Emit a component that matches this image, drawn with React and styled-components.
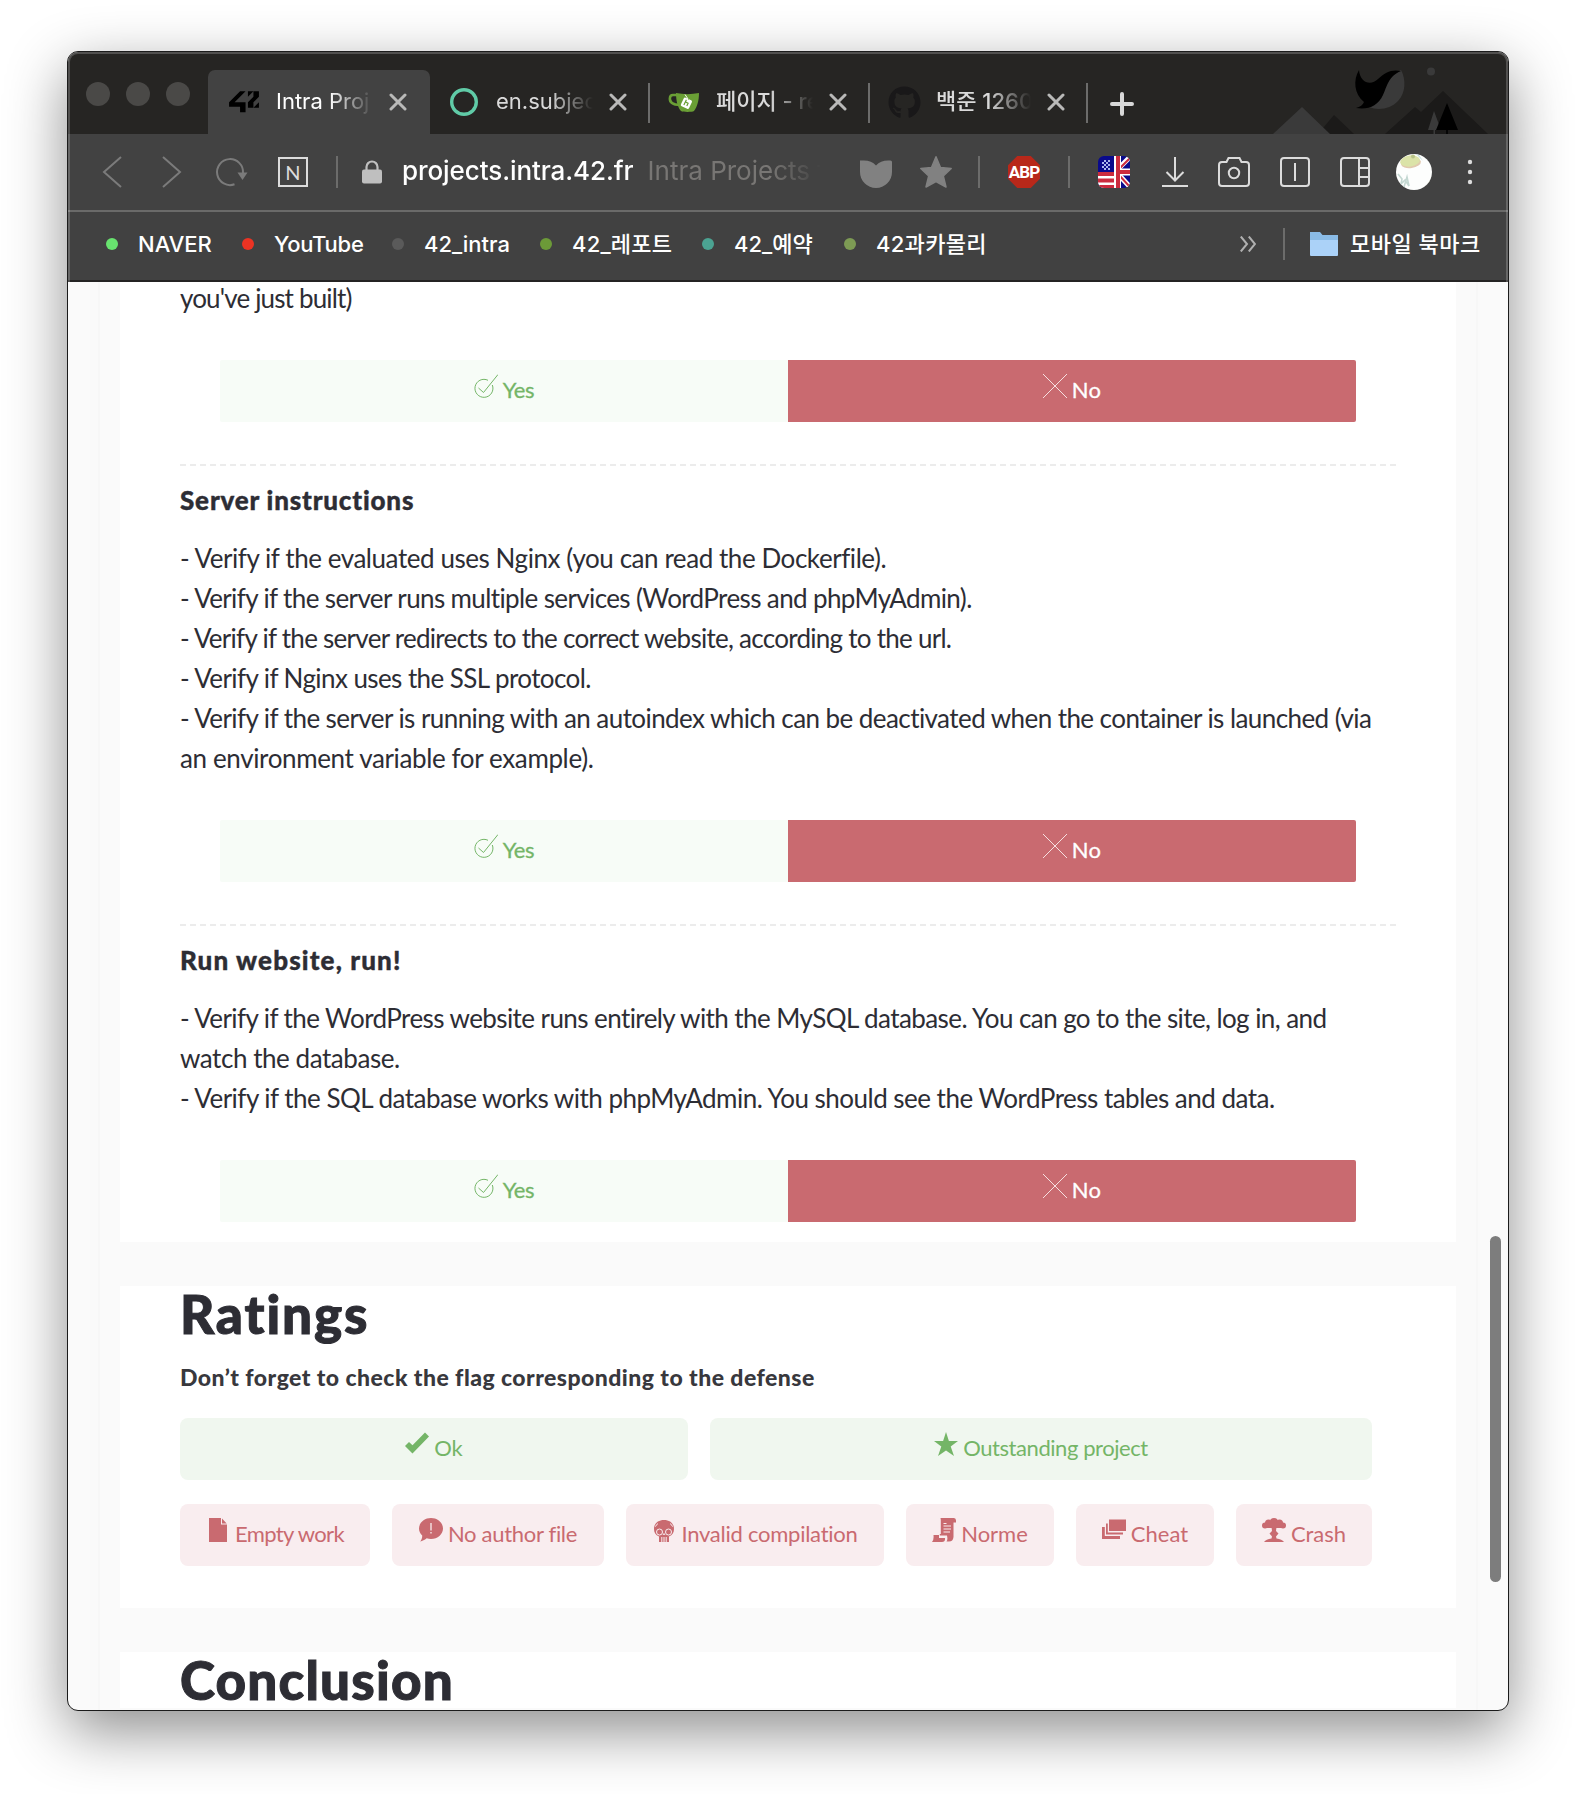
import React from "react";
import styled, { createGlobalStyle, css } from "styled-components";
import { FaGithub } from "react-icons/fa";

const UI = `Inter, "Noto Sans CJK KR", sans-serif`;
const BODY = `Lato, "Open Sans", sans-serif`;

const GlobalStyle = createGlobalStyle`
  * { box-sizing: border-box; }
  body { margin: 0; background: #fff; }
  h1, h2, h3, p { margin: 0; }
  svg { display: block; flex: none; }
`;

const Desktop = styled.div`
  height: 1794px;
  padding: 51px 67px 83px;
  overflow: hidden;
`;

const Window = styled.div`
  position: relative;
  display: flex;
  flex-direction: column;
  height: 1660px;
  border: 1px solid #1b1b1b;
  border-radius: 11px;
  overflow: hidden;
  background: #fafafa;
  box-shadow: 0 20px 60px rgba(0, 0, 0, 0.45);
`;

const Chrome = styled.div`
  position: relative;
  flex: none;
  font-family: ${UI};
  color: #fff;
  &::after {
    content: "";
    position: absolute;
    inset: 0;
    border: 2px solid rgba(255, 255, 255, 0.2);
    border-bottom: 0;
    border-radius: 10px 10px 0 0;
    pointer-events: none;
  }
`;

const TabBar = styled.div`
  display: flex;
  height: 82px;
  padding-top: 18px;
  background: #262523;
`;

const Lights = styled.div`
  display: flex;
  gap: 16px;
  width: 140px;
  padding: 12px 0 0 18px;
`;

const Light = styled.span`
  width: 24px;
  height: 24px;
  border-radius: 50%;
  background: #4a4947;
`;

const Tab = styled.div`
  display: flex;
  align-items: center;
  gap: 16px;
  width: ${(p) => p.$width}px;
  padding-left: 18px;
  color: #dadada;
  font-size: 22px;
  ${(p) =>
    p.$active &&
    css`
      padding-left: 20px;
      color: #fff;
      background: #424242;
      border-radius: 7px 7px 0 0;
    `}
`;

const Favicon = styled.span`
  display: flex;
  justify-content: center;
  width: 32px;
`;

const TabLabel = styled.span`
  width: ${(p) => p.$width || 97}px;
  height: 40px;
  line-height: 38px;
  font-weight: ${(p) => p.$weight || 400};
  white-space: nowrap;
  overflow: hidden;
  mask-image: linear-gradient(to right, #000 55%, transparent 100%);
`;

const Separator = styled.span`
  flex: none;
  width: 2px;
  height: ${(p) => p.$height || 32}px;
  margin: ${(p) => p.$margin || 0};
  background: #6c6c6b;
`;

const NewTab = styled.div`
  padding: 22px 0 0 22px;
`;

const Scenery = styled.div`
  margin: -18px 0 0 auto;
`;

const Toolbar = styled.div`
  display: flex;
  align-items: center;
  height: 78px;
  padding-left: 34px;
  background: #424242;
  border-bottom: 2px solid #6a6a69;
`;

const Tool = styled.span`
  display: flex;
  flex: none;
  justify-content: center;
  width: ${(p) => p.$width || 32}px;
  margin-left: ${(p) => p.$gap || 0}px;
`;

const NaverButton = styled.span`
  flex: none;
  width: 30px;
  height: 30px;
  margin-left: 30px;
  border: 2px solid #dcdcdc;
  color: #dcdcdc;
  font: 400 20px/26px ${BODY};
  text-align: center;
`;

const Address = styled.div`
  display: flex;
  gap: 14px;
  width: 428px;
  margin: 0 0 2px 20px;
  font-size: 26px;
  line-height: 40px;
  white-space: nowrap;
  overflow: hidden;
  mask-image: linear-gradient(to right, #000 86%, transparent 98%);
`;

const Host = styled.span`
  font-weight: 500;
  letter-spacing: -0.08px;
`;

const PageTitle = styled.span`
  color: #787674;
`;

const AdBlock = styled.span`
  flex: none;
  width: 32px;
  height: 32px;
  margin-left: 28px;
  background: #b8281a;
  clip-path: polygon(29% 0, 71% 0, 100% 29%, 100% 71%, 71% 100%, 29% 100%, 0 71%, 0 29%);
  color: #fff;
  font: 700 17px/33px Roboto, sans-serif;
  letter-spacing: -0.9px;
  text-align: center;
`;

const Bookmarks = styled.div`
  display: flex;
  align-items: center;
  height: 70px;
  padding: 0 0 4px 38px;
  background: #414141;
  border-bottom: 2px solid #242323;
  font-size: 22px;
  line-height: 40px;
  white-space: nowrap;
`;

const Bookmark = styled.span`
  display: flex;
  align-items: center;
  gap: 20px;
  width: ${(p) => p.$width}px;
  font-weight: 500;
  letter-spacing: ${(p) => p.$spacing}px;
`;

const Dot = styled.span`
  width: 12px;
  height: 12px;
  border-radius: 50%;
  background: ${(p) => p.$color};
`;

const More = styled.span`
  margin-left: auto;
`;

const MobileFolder = styled.span`
  display: flex;
  align-items: center;
  gap: 12px;
  width: 198px;
  letter-spacing: 0.5px;
  font-weight: 500;
`;

const Page = styled.main`
  flex: 1;
  min-height: 0;
  margin: 0 30px;
  padding: 0 20px;
  border: solid #f7f7f7;
  border-width: 0 2px;
  overflow: hidden;
  font-family: ${BODY};
  color: #2d2d34;
`;

const Card = styled.section`
  padding: 0 60px ${(p) => p.$bottom}px;
  margin-top: ${(p) => p.$scrolled || 0}px;
  margin-bottom: 44px;
  background: #fff;
`;

const Lines = styled.div`
  font-size: 26px;
  line-height: 40px;
  white-space: nowrap;
`;

const Line = styled.p`
  letter-spacing: ${(p) => p.$spacing}px;
`;

const Answers = styled.div`
  display: flex;
  margin: 42px 40px 0;
  border-radius: 2px;
  overflow: hidden;
`;

const Choice = styled.div`
  display: flex;
  justify-content: center;
  align-items: baseline;
  gap: 5px;
  height: 62px;
  font-size: 22px;
  line-height: 59px;
  letter-spacing: ${(p) => p.$spacing || 0}px;
  white-space: nowrap;
`;

const Answer = styled(Choice)`
  flex: 1;
  color: ${(p) => (p.$no ? "#fff" : "#74b567")};
  background: ${(p) => (p.$no ? "#c96a70" : "#f7fcf7")};
  -webkit-text-stroke: 0.3px currentColor;
`;

const Divider = styled.div`
  height: 2px;
  width: 1216px;
  margin-top: 42px;
  background: repeating-linear-gradient(to right, #ececec 0 6px, transparent 6px 10px);
`;

const SectionTitle = styled.h2`
  margin: 14px 0 18px;
  font-size: 26px;
  font-weight: 900;
  line-height: 40px;
  letter-spacing: ${(p) => p.$spacing}px;
  -webkit-text-stroke: 0.4px currentColor;
`;

const CardTitle = styled.h1`
  font-size: 53px;
  font-weight: 900;
  line-height: 56px;
  letter-spacing: ${(p) => p.$spacing}px;
  -webkit-text-stroke: 1px currentColor;
`;

const Hint = styled.h3`
  margin-top: 15px;
  font-size: 23px;
  font-weight: 900;
  line-height: 40px;
  letter-spacing: 0.45px;
  color: #38383d;
`;

const FlagRow = styled.div`
  display: grid;
  grid-template-columns: ${(p) => p.$columns};
  column-gap: 22px;
  margin-top: ${(p) => p.$top}px;
`;

const Flag = styled(Choice)`
  border-radius: 8px;
  color: ${(p) => (p.$good ? "#74b567" : "#c96a70")};
  background: ${(p) => (p.$good ? "#f0f7ef" : "#f9edef")};
`;

const Scrollbar = styled.div`
  position: absolute;
  top: 1184px;
  right: 7px;
  width: 11px;
  height: 346px;
  border-radius: 6px;
  background: #7d7d7d;
`;

const Close = () => (
  <svg width="18" height="18" viewBox="0 0 18 18" stroke="#b9b9b8" strokeWidth="3" strokeLinecap="round">
    <path d="M2 2 16 16M16 2 2 16" />
  </svg>
);

const Logo42 = () => (
  <svg width="32" height="22" viewBox="0 -60 960 660">
    <polygon points="32,412.6 362.1,412.6 362.1,578 526.8,578 526.8,279.1 197.3,279.1 526.8,-51.1 362.1,-51.1 32,279.1" />
    <polygon points="597.9,114.2 762.7,-51.1 597.9,-51.1" />
    <polygon points="762.7,114.2 597.9,279.1 597.9,443.9 762.7,443.9 762.7,279.1 928,114.2 928,-51.1 762.7,-51.1" />
    <polygon points="928,279.1 762.7,443.9 928,443.9" />
  </svg>
);

const Ring = () => (
  <svg width="28" height="28" viewBox="0 0 28 28">
    <circle cx="14" cy="14" r="12.3" fill="none" stroke="#60cba7" strokeWidth="3.4" />
  </svg>
);

const Mug = () => (
  <svg width="32" height="22" viewBox="0 0 32 22">
    <path d="M9 4H5C1 4 1 10 4 12c2 1.500 5 2 8 2" fill="none" stroke="#6a9f35" strokeWidth="2.600" />
    <path d="M8 2c8 1.500 15 1.500 23 0 0 8-2 14-5 18-2 1.200-11 1.200-13 0C10 17 8 10 8 2z" fill="#6a9f35" />
    <g transform="rotate(25 18.500 12)">
      <rect x="14" y="7.500" width="9" height="9.500" rx="1.500" fill="#fff" />
      <path d="M17 9v6M17 11.500h3v3M18.500 4v4" fill="none" stroke="#6a9f35" strokeWidth="1.200" />
    </g>
    <path d="M17 3.500 20 8" stroke="#fff" strokeWidth="1" />
  </svg>
);

const Landscape = () => (
  <svg width="238" height="82" viewBox="1270 52 238 82">
    <path d="M1318 134 1334 115 1354 134z" fill="#1b1a19" />
    <path d="M1273 134 1302 107 1330 134z" fill="#3a3a3a" />
    <path d="M1385 134 1415 107 1421 112 1443 91 1488 134z" fill="#1b1a19" />
    <path d="M1434 111 1441 130H1435V134H1433.500V130H1428z" fill="#3a3a3a" />
    <path d="M1447 103 1458 130H1447.800V134H1446.200V130H1436z" fill="#000" />
    <circle cx="1431" cy="71.500" r="4" fill="#3a3a3a" />
    <path d="M1401 70C1406 79 1406 93 1398 101C1391 109 1378 111 1369 107C1385 103 1383 78 1401 70z" fill="#3a3a3a" />
    <path d="M1359 70C1360 83 1371 86 1378 79C1385 72 1392 69 1401 71C1388 76 1387 87 1383 95C1378 106 1368 110 1356 108C1360 107 1363 105 1364 102C1354 94 1353 80 1359 70z" fill="#000" />
  </svg>
);

const Chevron = ({ flip }) => (
  <svg width="20" height="32" viewBox="0 0 20 32" fill="none" stroke="#7b7b7b" strokeWidth="2">
    <path d={flip ? "M1 1 18 16 1 31" : "M19 1 2 16 19 31"} />
  </svg>
);

const Reload = () => (
  <svg width="34" height="32" viewBox="0 0 34 32" fill="none" stroke="#7b7b7b" strokeWidth="2">
    <path d="M20.500 28.300A13 13 0 1 1 29 17" />
    <path d="M23.500 16.500h10L28.500 24z" fill="#7b7b7b" stroke="none" />
  </svg>
);

const Lock = () => (
  <svg width="20" height="24" viewBox="0 0 20 24">
    <path d="M4.500 11V7a5.500 5.500 0 0 1 11 0v4" fill="none" stroke="#bfbfbf" strokeWidth="2.200" />
    <rect y="9.500" width="20" height="14" rx="2" fill="#bfbfbf" />
  </svg>
);

const Pocket = () => (
  <svg width="32" height="32" viewBox="0 0 32 32" fill="#818181">
    <path d="M0 4.500H4C9 4.500 13 6 16 9.500 19 6 23 4.500 28 4.500H30.500Q32 4.500 32 6V16A16 16 0 0 1 0 16V6Q0 4.500 0 4.500z" />
  </svg>
);

const BookmarkStar = () => (
  <svg width="32" height="32" viewBox="0 0 32 32" fill="#818181" stroke="#818181" strokeWidth="1.500" strokeLinejoin="round">
    <path d="M16 .8 20.500 11.500 31.200 12.500 23.300 20 26 31 16 25.500 6 31 8.700 20 .8 12.500 11.500 11.500z" />
  </svg>
);

const Flags = () => (
  <svg width="32" height="32" viewBox="0 0 32 32">
    <clipPath id="flagClip"><rect width="32" height="32" rx="6" /></clipPath>
    <g clipPath="url(#flagClip)">
      <rect width="32" height="32" fill="#0a0a8c" />
      <path d="M0 16h16v16H0z" fill="#fff" />
      <path d="M0 16h16v4H0zM0 22.500h16v4H0zM0 29h16v3H0z" fill="#cb2b3e" />
      <g fill="#a9b5ee">
        <path d="M6 4h2v2H6zM10 4h2v2h-2zM4 6h2v2H4zM8 6h2v2H8zM6 8h2v2H6zM10 8h2v2h-2zM4 10h2v2H4zM8 10h2v2H8zM6 12h2v2H6zM10 12h2v2h-2z" />
      </g>
      <path d="M20 13 32 1M20 18 32 31" stroke="#fff" strokeWidth="5" />
      <path d="M21 13 32 2M21 19 32 31" stroke="#cb2b3e" strokeWidth="2" />
      <path d="M16 0h7v32h-7zM16 12.500h16v7H16z" fill="#fff" />
      <path d="M18 0h4v32h-4zM18 14h14v4H18z" fill="#cb2b3e" />
    </g>
  </svg>
);

const Download = () => (
  <svg width="26" height="30" viewBox="0 0 26 30" fill="none" stroke="#dcdcdc" strokeWidth="2">
    <path d="M13 0V23M4.500 15 13 23.500 21.500 15M0 29H26" />
  </svg>
);

const Camera = () => (
  <svg width="32" height="30" viewBox="0 0 32 30" fill="none" stroke="#dcdcdc" strokeWidth="2">
    <path d="M4 5H8.500L10.500 1H21.500L23.500 5H28Q31 5 31 8V26Q31 29 28 29H4Q1 29 1 26V8Q1 5 4 5z" />
    <circle cx="16" cy="16" r="5.200" />
  </svg>
);

const Panel = ({ side }) => (
  <svg width="30" height="30" viewBox="0 0 30 30" fill="none" stroke="#dcdcdc" strokeWidth="2">
    <rect x="1" y="1" width="28" height="28" rx="3" />
    <path d={side ? "M19 1V29M19 11H29M19 20H29" : "M15 6V24"} />
  </svg>
);

const Avatar = () => (
  <svg width="36" height="36" viewBox="0 0 36 36">
    <clipPath id="avatarClip"><circle cx="18" cy="18" r="18" /></clipPath>
    <g clipPath="url(#avatarClip)">
      <rect width="36" height="36" fill="#fdfefd" />
      <ellipse cx="15" cy="9" rx="10" ry="5" fill="#e0c9ae" transform="rotate(-8 15 9)" />
      <ellipse cx="14" cy="7" rx="10" ry="5.500" fill="#dbe3a8" transform="rotate(-8 14 7)" />
      <circle cx="17" cy="2.500" r="2" fill="#b9c489" />
      <path d="M20 0 27 7 23 1z" fill="#c3dcdc" />
      <path d="M2 20 6 25 5 30 9 26 13 32 11 23 8 33" fill="none" stroke="#c4d8d2" strokeWidth="1.600" />
      <path d="M29 34 34 26V34z" fill="#e6ebcb" />
    </g>
  </svg>
);

const Dots = () => (
  <svg width="6" height="26" viewBox="0 0 6 26" fill="#dcdcdc">
    <circle cx="3" cy="3" r="2.200" /><circle cx="3" cy="13" r="2.200" /><circle cx="3" cy="23" r="2.200" />
  </svg>
);

const Plus = () => (
  <svg width="24" height="24" viewBox="0 0 24 24" stroke="#d8d8d8" strokeWidth="4" strokeLinecap="round">
    <path d="M12 2V22M2 12H22" />
  </svg>
);

const DoubleChevron = () => (
  <svg width="16" height="16" viewBox="0 0 16 16" fill="none" stroke="#b0b0b0" strokeWidth="2">
    <path d="M.8.500 7 8 .8 15.500M8.800.500 15 8 8.800 15.500" />
  </svg>
);

const Folder = () => (
  <svg width="28" height="24" viewBox="0 0 28 24">
    <path d="M0 0H10L12.500 3H28V10H0z" fill="#8abbe6" />
    <path d="M0 8H28V23Q28 24 27 24H1Q0 24 0 23z" fill="#abd2f8" />
  </svg>
);

const icon = { width: 24, height: 24, viewBox: "0 0 24 24" };

const CheckCircle = () => (
  <svg {...icon} fill="none" stroke="#74b567" strokeWidth="1">
    <path d="M14 6.300A9 9 0 1 0 18.300 11" />
    <path d="M4.500 14 9.500 18.500 24 .5" />
  </svg>
);
const Cross = () => (
  <svg {...icon} stroke="#f6dfe0" strokeWidth="1">
    <path d="M0 0 24 24M24 0 0 24" />
  </svg>
);
const Tick = () => (
  <svg {...icon} fill="#74b567">
    <path d="M20 .5 24 4.500 7.500 21.500 0 14 4 10 7.500 13.300z" />
  </svg>
);
const FlagStar = () => (
  <svg {...icon} fill="#74b567">
    <path d="M12 0 14.900 9H24L16.700 14.600 20 24 12 18.400 4 24 7.300 14.600 0 9H9.100z" />
  </svg>
);
const Doc = () => (
  <svg {...icon} fill="#c96a70">
    <path d="M3 0H15V6.500H21V24H3zM16 .5 20.700 5.500H16z" />
  </svg>
);
const Bubble = () => (
  <svg {...icon}>
    <path d="M12 0C18.600 0 24 4.700 24 10.500S18.600 21 12 21C10.500 21 9 20.800 7.700 20.300 5.500 22 3.500 23 1.200 23.500 2.700 21.500 3.300 19.500 3.200 17.500 1.200 15.600 0 13.200 0 10.500 0 4.700 5.400 0 12 0z" fill="#c96a70" />
    <path d="M12 5V12.500M12 14V15.500" stroke="#f9edef" strokeWidth="1.300" />
  </svg>
);
const Skull = () => (
  <svg {...icon}>
    <path d="M12 2C18 2 22 5.500 22 11 22 14.500 20.500 17 17 18.500V24H7V18.500C3.500 17 2 14.500 2 11 2 5.500 6 2 12 2z" fill="#c96a70" />
    <g fill="none" stroke="#f9edef" strokeWidth="1">
      <circle cx="7.500" cy="14" r="3" /><circle cx="16.500" cy="14" r="3" />
      <path d="M11 17 12 15.500 13 17M9.800 19V24M12 19V24M14.200 19V24M5.500 5.500Q5 7.500 3 8.500M18.500 5.500Q19 7.500 21 8.500" />
    </g>
  </svg>
);
const Scroll = () => (
  <svg {...icon} fill="#c96a70">
    <path d="M8.500 0H22Q24 0 24 2.500V4.500H21.500V19Q21 23.500 17 23.500H14.500Q16 22 15 17.500H7.800V16H8.800V2.500Q8.800 1 8.500 0zM1.500 17H7V20H13Q13.500 24 10 24H0Q2 22 1.500 17z" />
    <path d="M11.500 5.500H14.500M11.500 8H19M11.500 11H19M11.500 14H18" stroke="#f9edef" strokeWidth="1" />
  </svg>
);
const Stack = () => (
  <svg {...icon} fill="#c96a70">
    <path d="M7 1.500H24V13H7zM4 5.500H5.800V14.500H21V16.500H4zM0 9H2.800V18H18V21H0z" />
  </svg>
);
const Mushroom = () => (
  <svg {...icon} fill="#c96a70">
    <circle cx="12" cy="4" r="4" /><circle cx="6.500" cy="5" r="3.500" /><circle cx="17.500" cy="5" r="3.500" />
    <circle cx="3" cy="7.500" r="3" /><circle cx="21" cy="7.500" r="3" /><rect x="3" y="5" width="18" height="5" rx="2" />
    <path d="M9.500 9H14.500L14 13 16.500 15.500 14 18.500 14.500 20.500Q20 21 22 24H2Q4 21 9.500 20.500L10 18.500 7.500 15.500 10 13z" />
  </svg>
);

const bookmarks = [
  ["NAVER", "#68e36f", 136, 0],
  ["YouTube", "#ec3323", 150, -0.25],
  ["42_intra", "#5a5a5a", 148, 0],
  ["42_레포트", "#6c9a38", 162, 0.2],
  ["42_예약", "#4ba392", 142, 0],
  ["42과카몰리", "#7d9b54", 150, 0.3],
];

const serverLines = [
  ["- Verify if the evaluated uses Nginx (you can read the Dockerfile).", -0.44],
  ["- Verify if the server runs multiple services (WordPress and phpMyAdmin).", -0.62],
  ["- Verify if the server redirects to the correct website, according to the url.", -0.73],
  ["- Verify if Nginx uses the SSL protocol.", -0.58],
  ["- Verify if the server is running with an autoindex which can be deactivated when the container is launched (via", -0.57],
  ["an environment variable for example).", -0.37],
];

const websiteLines = [
  ["- Verify if the WordPress website runs entirely with the MySQL database. You can go to the site, log in, and", -0.58],
  ["watch the database.", -0.45],
  ["- Verify if the SQL database works with phpMyAdmin. You should see the WordPress tables and data.", -0.52],
];

const failures = [
  ["Empty work", Doc, -0.65],
  ["No author file", Bubble, -0.3],
  ["Invalid compilation", Skull, -0.25],
  ["Norme", Scroll, 0],
  ["Cheat", Stack, 0],
  ["Crash", Mushroom, 0],
];

const YesNo = () => (
  <Answers>
    <Answer $spacing={-0.4}><CheckCircle />Yes</Answer>
    <Answer $no $spacing={0.3}><Cross />No</Answer>
  </Answers>
);

const Paragraph = ({ lines }) => (
  <Lines>
    {lines.map(([text, spacing]) => (
      <Line key={text} $spacing={spacing}>{text}</Line>
    ))}
  </Lines>
);

export default function App() {
  return (
    <Desktop>
      <GlobalStyle />
      <Window>
        <Chrome>
          <TabBar>
            <Lights><Light /><Light /><Light /></Lights>
            <Tab $active $width={222}>
              <Favicon><Logo42 /></Favicon><TabLabel>Intra Proj</TabLabel><Close />
            </Tab>
            <Tab $width={218}>
              <Favicon><Ring /></Favicon><TabLabel>en.subjec</TabLabel><Close />
            </Tab>
            <Separator $height={40} $margin="13px 0 0" />
            <Tab $width={218}>
              <Favicon><Mug /></Favicon><TabLabel $weight={500}>페이지 - re</TabLabel><Close />
            </Tab>
            <Separator $height={40} $margin="13px 0 0" />
            <Tab $width={216}>
              <Favicon><FaGithub size={33} color="#191819" /></Favicon><TabLabel $weight={500} $width={95}>백준 1260</TabLabel><Close />
            </Tab>
            <Separator $height={40} $margin="13px 0 0" />
            <NewTab><Plus /></NewTab>
            <Scenery><Landscape /></Scenery>
          </TabBar>

          <Toolbar>
            <Tool $width={20}><Chevron /></Tool>
            <Tool $width={20} $gap={40}><Chevron flip /></Tool>
            <Tool $width={34} $gap={32}><Reload /></Tool>
            <NaverButton>N</NaverButton>
            <Separator $margin="0 24px 0 28px" />
            <Lock />
            <Address>
              <Host>projects.intra.42.fr</Host>
              <PageTitle>Intra Projects f</PageTitle>
            </Address>
            <Tool $gap={30}><Pocket /></Tool>
            <Tool $gap={28}><BookmarkStar /></Tool>
            <Separator $margin="0 0 0 26px" />
            <AdBlock>ABP</AdBlock>
            <Separator $margin="0 0 0 28px" />
            <Tool $gap={28}><Flags /></Tool>
            <Tool $width={26} $gap={32}><Download /></Tool>
            <Tool $gap={30}><Camera /></Tool>
            <Tool $width={30} $gap={30}><Panel /></Tool>
            <Tool $width={30} $gap={30}><Panel side /></Tool>
            <Tool $width={36} $gap={26}><Avatar /></Tool>
            <Tool $width={6} $gap={35}><Dots /></Tool>
          </Toolbar>

          <Bookmarks>
            {bookmarks.map(([name, color, width, spacing]) => (
              <Bookmark key={name} $width={width} $spacing={spacing}><Dot $color={color} />{name}</Bookmark>
            ))}
            <More><DoubleChevron /></More>
            <Separator $margin="0 25px 0 27px" />
            <MobileFolder><Folder />모바일 북마크</MobileFolder>
          </Bookmarks>
        </Chrome>

        <Page>
          <Card $bottom={20} $scrolled={-4}>
            <Paragraph lines={[["you've just built)", -0.84]]} />
            <YesNo />
            <Divider />
            <SectionTitle $spacing={0.82}>Server instructions</SectionTitle>
            <Paragraph lines={serverLines} />
            <YesNo />
            <Divider />
            <SectionTitle $spacing={1.15}>Run website, run!</SectionTitle>
            <Paragraph lines={websiteLines} />
            <YesNo />
          </Card>

          <Card $bottom={42}>
            <CardTitle $spacing={1.9}>Ratings</CardTitle>
            <Hint>Don’t forget to check the flag corresponding to the defense</Hint>
            <FlagRow $columns="508px 662px" $top={21}>
              <Flag $good><Tick />Ok</Flag>
              <Flag $good $spacing={-0.43}><FlagStar />Outstanding project</Flag>
            </FlagRow>
            <FlagRow $columns="190px 212px 258px 148px 138px 136px" $top={24}>
              {failures.map(([name, Icon, spacing]) => (
                <Flag key={name} $spacing={spacing}><Icon />{name}</Flag>
              ))}
            </FlagRow>
          </Card>

          <Card $bottom={0}>
            <CardTitle $spacing={1.2}>Conclusion</CardTitle>
          </Card>
        </Page>
        <Scrollbar />
      </Window>
    </Desktop>
  );
}
